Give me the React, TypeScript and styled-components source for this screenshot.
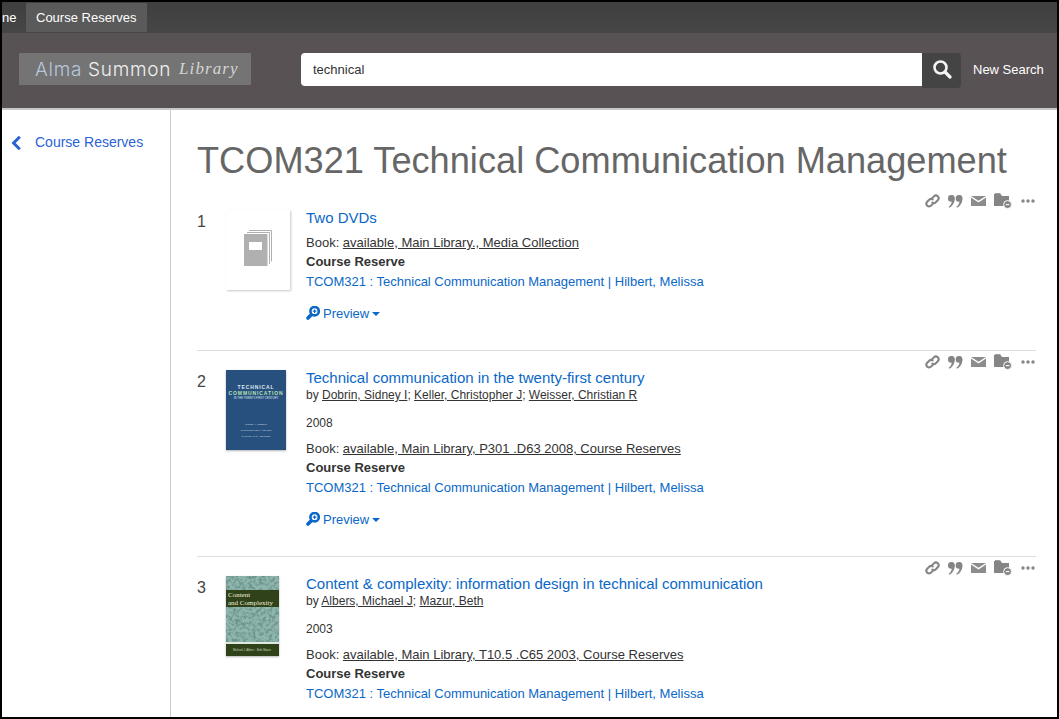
import React from "react";
import styled, { createGlobalStyle } from "styled-components";

const Global = createGlobalStyle`
  html, body { margin: 0; padding: 0; background: #fff; }
  body { font-family: "Liberation Sans", Arial, sans-serif; overflow: hidden; }
  * { box-sizing: border-box; }
`;

const Frame = styled.div`
  width: 1059px;
  height: 719px;
  border: 2px solid #000;
  overflow: hidden;
  display: flex;
  flex-direction: column;
  background: #fff;
`;

const TopBar = styled.nav`
  height: 31px;
  flex: none;
  background: linear-gradient(#3f3f3f, #464646);
  display: flex;
  align-items: flex-start;
  color: #fff;
  font-size: 13px;
`;

const Cut = styled.span`
  width: 24px;
  padding-top: 8px;
  overflow: hidden;
  white-space: nowrap;
`;

const ActiveTab = styled.span`
  height: 29px;
  width: 121px;
  margin-top: 1px;
  background: #5a5a5a;
  padding: 7px 0 0 10px;
  white-space: nowrap;
`;

const Header = styled.header`
  height: 77px;
  flex: none;
  background: #595255;
  border-bottom: 2px solid #c8c8c8;
  padding: 20px 0 0 17px;
  display: flex;
  align-items: flex-start;
`;

const Logo = styled.div`
  width: 232px;
  height: 32px;
  flex: none;
  background: #747474;
  display: flex;
  align-items: center;
  padding: 0 0 0 16px;
  font-family: "Inter", sans-serif;
  font-size: 19px;
  font-weight: 300;
  white-space: nowrap;
`;

const LogoAlma = styled.span`
  color: #b5c8dc;
  letter-spacing: 0.7px;
  margin-right: 6px;
`;

const LogoSummon = styled.span`
  color: #f0f0f0;
  letter-spacing: 0.7px;
  margin-right: 8px;
`;

const LogoLibrary = styled.span`
  color: #d4d4d4;
  font-family: "Liberation Serif", serif;
  font-style: italic;
  font-size: 17px;
  letter-spacing: 1.1px;
`;

const SearchForm = styled.form`
  display: flex;
  flex: none;
  margin-left: 50px;
  width: 660px;
  height: 35px;
`;

const SearchInput = styled.div`
  flex: 1;
  height: 33px;
  background: #fff;
  border-radius: 4px 0 0 4px;
  color: #333;
  font-size: 13px;
  padding: 9px 0 0 12px;
`;

const SearchButton = styled.div`
  width: 39px;
  height: 35px;
  background: #444;
  border-radius: 0 4px 4px 0;
  display: flex;
  align-items: center;
  justify-content: center;
  padding-bottom: 3px;
`;

const NewSearch = styled.span`
  color: #fff;
  font-size: 13px;
  margin-left: 12px;
  margin-top: 9px;
  white-space: nowrap;
`;

const Body = styled.div`
  flex: 1;
  display: flex;
  min-height: 0;
`;

const Sidebar = styled.aside`
  width: 169px;
  flex: none;
  border-right: 1px solid #ccc;
  padding: 24px 0 0 8px;
  display: flex;
  align-items: flex-start;
  gap: 13px;
  color: #2a63d4;
  font-size: 14px;
`;

const Main = styled.main`
  flex: 1;
  min-width: 0;
  padding: 27px 21px 0 26px;
`;

const Title = styled.h1`
  margin: 0 0 6px;
  color: #666;
  font-size: 36.2px;
  font-weight: 400;
  line-height: 48px;
  white-space: nowrap;
`;

const Result = styled.article<{ $height: number }>`
  position: relative;
  display: flex;
  height: ${(p) => p.$height}px;
  padding-top: 19px;
  border-bottom: 1px solid #ddd;
  &:last-child { border-bottom: none; }
`;

const Num = styled.div`
  width: 29px;
  flex: none;
  font-size: 16px;
  color: #444;
  line-height: 20px;
  padding-top: 2px;
`;

const Thumb = styled.div`
  width: 60px;
  height: 80px;
  flex: none;
  margin-right: 20px;
`;

const Placeholder = styled(Thumb)`
  width: 64px;
  margin-right: 16px;
  background: #fff;
  box-shadow: 1px 1px 2px rgba(0, 0, 0, 0.22);
  display: flex;
  align-items: center;
  justify-content: center;
  padding-bottom: 4px;
`;

const CoverBlue = styled(Thumb)`
  background: #27507f;
  box-shadow: 0 1px 2px rgba(0, 0, 0, 0.3);
  color: #dfe9ef;
  text-align: center;
  padding-top: 14px;
  overflow: hidden;
`;

const CoverTitle = styled.div`
  font-size: 5px;
  line-height: 6px;
  font-weight: 700;
  letter-spacing: 0.9px;
  white-space: nowrap;
`;

const CoverAccent = styled(CoverTitle)`
  color: #b8e0b0;
`;

const CoverSub = styled.div`
  font-size: 2.8px;
  line-height: 5px;
  white-space: nowrap;
  margin-bottom: 21px;
`;

const CoverAuthor = styled.div`
  font-size: 2.5px;
  line-height: 6px;
  white-space: nowrap;
  color: #c2d2dd;
`;

const CoverGreen = styled(Thumb)`
  width: 53px;
  margin-right: 27px;
  box-shadow: 0 1px 2px rgba(0, 0, 0, 0.3);
  overflow: hidden;
`;

const Info = styled.div`
  flex: 1;
  min-width: 0;
  font-size: 13px;
  color: #333;
`;

const ItemTitle = styled.div`
  color: #0a68c8;
  font-size: 15px;
  line-height: 15px;
`;

const Line = styled.div<{ $top?: number }>`
  line-height: 14px;
  height: 14px;
  margin-top: ${(p) => p.$top ?? 5}px;
  white-space: nowrap;
`;

const SmallLine = styled(Line)`
  font-size: 12px;
`;

const U = styled.span`
  text-decoration: underline;
`;

const Link = styled.span`
  color: #0a68c8;
`;

const PreviewRow = styled.div`
  display: flex;
  align-items: center;
  gap: 3px;
  margin-top: 17px;
  height: 14px;
  color: #0a68c8;
`;

const Caret = styled.span`
  width: 0;
  height: 0;
  margin-top: 1px;
  border-left: 4px solid transparent;
  border-right: 4px solid transparent;
  border-top: 4px solid #0a68c8;
`;

const Actions = styled.div<{ $top: number }>`
  position: absolute;
  right: 1px;
  top: ${(p) => p.$top}px;
  display: flex;
  align-items: center;
  gap: 8px;
  height: 16px;
`;

const ChevronLeft = () => (
  <svg width="12" height="16" viewBox="0 0 12 16" style={{ marginTop: 1 }}>
    <path d="M9.8 1.8 3.6 8l6.2 6.2" fill="none" stroke="#2a63d4" strokeWidth="3" />
  </svg>
);

const SearchIcon = () => (
  <svg width="20" height="20" viewBox="0 0 20 20">
    <circle cx="8.5" cy="8.5" r="6" fill="none" stroke="#f4f4f4" strokeWidth="2.6" />
    <path d="M13 13 18 18" stroke="#f4f4f4" strokeWidth="3.2" strokeLinecap="round" />
  </svg>
);

const LinkIcon = () => (
  <svg width="15" height="14" viewBox="0 0 15 14" fill="none" stroke="#858585" strokeWidth="2.1" strokeLinecap="round">
    <path d="M7 4.4 8.9 2.4a2.7 2.7 0 0 1 3.9 3.8L10.8 8.2a2.7 2.7 0 0 1-3.4.4" />
    <path d="M8 9.6 6.1 11.6a2.7 2.7 0 0 1-3.9-3.8L4.2 5.8a2.7 2.7 0 0 1 3.4-.4" />
  </svg>
);

const QuoteIcon = () => (
  <svg width="15" height="13" viewBox="0 0 15 13" fill="#858585">
    <circle cx="3.3" cy="3.4" r="3.3" />
    <path d="M3.6 0.2C6 .2 6.7 2.4 6.7 4c0 3.6-2 7-5.4 8.8l-.7-1c1.9-1.4 3-3.4 3.2-5.4z" />
    <circle cx="11" cy="3.4" r="3.3" />
    <path d="M11.3 0.2c2.4 0 3.1 2.2 3.1 3.8 0 3.6-2 7-5.4 8.8l-.7-1c1.9-1.4 3-3.4 3.2-5.4z" />
  </svg>
);

const MailIcon = () => (
  <svg width="15" height="10" viewBox="0 0 15 10" fill="#8c8c8c">
    <path d="M0 0h15L7.5 4.8z" />
    <path d="M0 1.6V10h15V1.6L7.5 6.4z" />
  </svg>
);

const FolderIcon = () => (
  <svg width="18" height="16" viewBox="0 0 18 16">
    <path d="M0 1h6.5l1.6 2H15v10H0z" fill="#858585" />
    <path d="M1 0h5.5v.8H1z" fill="#858585" />
    <circle cx="13.6" cy="11.6" r="4" fill="#858585" stroke="#fff" strokeWidth="1" />
    <path d="M11.8 11.6h3.6" stroke="#fff" strokeWidth="1.1" />
  </svg>
);

const DotsIcon = () => (
  <svg width="14" height="4" viewBox="0 0 14 4" fill="#858585" style={{ marginLeft: 1 }}>
    <circle cx="2" cy="2" r="1.7" />
    <circle cx="7" cy="2" r="1.7" />
    <circle cx="12" cy="2" r="1.7" />
  </svg>
);

const PreviewIcon = () => (
  <svg width="14" height="14" viewBox="0 0 14 14">
    <circle cx="8.6" cy="5.2" r="4.2" fill="none" stroke="#0a68c8" strokeWidth="2.6" />
    <path d="M6.8 5.2h3.6M8.6 3.4v3.6" stroke="#0a68c8" strokeWidth="1.2" />
    <path d="M5 9 2 12" stroke="#0a68c8" strokeWidth="3.6" strokeLinecap="round" />
  </svg>
);

const BookIcon = () => (
  <svg width="28" height="36" viewBox="0 0 28 36" fill="none">
    <path d="M5 .5h22.5v31" stroke="#b0b0b0" />
    <path d="M3 2.5h22.5v31.5" stroke="#b0b0b0" />
    <path d="M0 4h23.5v32H0z" fill="#b0b0b0" />
    <path d="M5 12h13v8H5z" fill="#fff" />
  </svg>
);

const GreenCoverArt = () => (
  <svg width="53" height="80" viewBox="0 0 53 80">
    <defs>
      <filter id="mottle" x="0" y="0" width="100%" height="100%">
        <feTurbulence type="fractalNoise" baseFrequency="0.3" numOctaves="3" seed="7" />
        <feColorMatrix values="0 0 0 0 0.16  0 0 0 0 0.3  0 0 0 0 0.26  4 0 0 0 -1.7" />
      </filter>
    </defs>
    <rect width="53" height="80" fill="#8db6ae" />
    <rect width="53" height="80" filter="url(#mottle)" />
    <rect y="14" width="53" height="17" fill="#2f421a" />
    <rect y="66" width="53" height="2" fill="#dfe8de" />
    <rect y="68" width="53" height="12" fill="#2f421a" />
    <text x="2" y="21" fontFamily="Liberation Serif, serif" fontSize="7" fill="#f1eeda">Content</text>
    <text x="2" y="28.5" fontFamily="Liberation Serif, serif" fontSize="7" fill="#f1eeda">and Complexity</text>
    <text x="7" y="75" fontFamily="Liberation Sans, sans-serif" fontSize="2.8" fill="#cbd6bd">Michael J. Albers · Beth Mazur</text>
  </svg>
);

const ActionIcons = ({ top }: { top: number }) => (
  <Actions $top={top}>
    <LinkIcon />
    <QuoteIcon />
    <MailIcon />
    <FolderIcon />
    <DotsIcon />
  </Actions>
);

const Course = () => (
  <Line $top={6}>
    <Link>TCOM321 : Technical Communication Management | Hilbert, Melissa</Link>
  </Line>
);

const Preview = () => (
  <PreviewRow>
    <PreviewIcon />
    <span>Preview</span>
    <Caret />
  </PreviewRow>
);

export default function App() {
  return (
    <>
      <Global />
      <Frame>
        <TopBar>
          <Cut>ne</Cut>
          <ActiveTab>Course Reserves</ActiveTab>
        </TopBar>
        <Header>
          <Logo>
            <LogoAlma>Alma</LogoAlma>
            <LogoSummon>Summon</LogoSummon>
            <LogoLibrary>Library</LogoLibrary>
          </Logo>
          <SearchForm>
            <SearchInput>technical</SearchInput>
            <SearchButton>
              <SearchIcon />
            </SearchButton>
          </SearchForm>
          <NewSearch>New Search</NewSearch>
        </Header>
        <Body>
          <Sidebar>
            <ChevronLeft />
            <span>Course Reserves</span>
          </Sidebar>
          <Main>
            <Title>TCOM321 Technical Communication Management</Title>
            <Result $height={160}>
              <ActionIcons top={2} />
              <Num>1</Num>
              <Placeholder>
                <BookIcon />
              </Placeholder>
              <Info>
                <ItemTitle>Two DVDs</ItemTitle>
                <Line $top={11}>
                  Book: <U>available, Main Library., Media Collection</U>
                </Line>
                <Line>
                  <strong>Course Reserve</strong>
                </Line>
                <Course />
                <Preview />
              </Info>
            </Result>
            <Result $height={206}>
              <ActionIcons top={3} />
              <Num>2</Num>
              <CoverBlue>
                <CoverTitle>TECHNICAL</CoverTitle>
                <CoverAccent>COMMUNICATION</CoverAccent>
                <CoverSub>IN THE TWENTY-FIRST CENTURY</CoverSub>
                <CoverAuthor>SIDNEY I. DOBRIN</CoverAuthor>
                <CoverAuthor>CHRISTOPHER J. KELLER</CoverAuthor>
                <CoverAuthor>CHRISTIAN R. WEISSER</CoverAuthor>
              </CoverBlue>
              <Info>
                <ItemTitle>Technical communication in the twenty-first century</ItemTitle>
                <SmallLine $top={3}>
                  by <U>Dobrin, Sidney I</U>; <U>Keller, Christopher J</U>; <U>Weisser, Christian R</U>
                </SmallLine>
                <SmallLine $top={14}>2008</SmallLine>
                <Line $top={12}>
                  Book: <U>available, Main Library, P301 .D63 2008, Course Reserves</U>
                </Line>
                <Line>
                  <strong>Course Reserve</strong>
                </Line>
                <Course />
                <Preview />
              </Info>
            </Result>
            <Result $height={170}>
              <ActionIcons top={3} />
              <Num>3</Num>
              <CoverGreen>
                <GreenCoverArt />
              </CoverGreen>
              <Info>
                <ItemTitle>Content &amp; complexity: information design in technical communication</ItemTitle>
                <SmallLine $top={3}>
                  by <U>Albers, Michael J</U>; <U>Mazur, Beth</U>
                </SmallLine>
                <SmallLine $top={14}>2003</SmallLine>
                <Line $top={12}>
                  Book: <U>available, Main Library, T10.5 .C65 2003, Course Reserves</U>
                </Line>
                <Line>
                  <strong>Course Reserve</strong>
                </Line>
                <Course />
              </Info>
            </Result>
          </Main>
        </Body>
      </Frame>
    </>
  );
}
